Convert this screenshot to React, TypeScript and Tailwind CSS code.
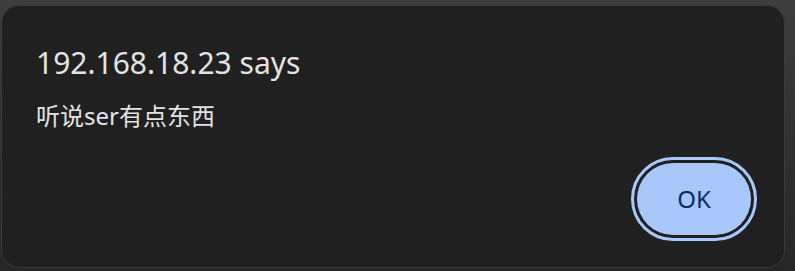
export default function App() {
  return (
    <div className="w-[795px] h-[271px] overflow-hidden bg-gradient-to-b from-[#3d3d3d] to-[#262626] pt-[5px] pl-px">
      <div
        className="w-[784px] h-[263px] rounded-[18px] border border-[#3a3a3a] bg-[#202020] pl-[34px] pr-[33px] pt-[42px] flex flex-col"
        style={{ fontFamily: '"Noto Sans", "Noto Sans CJK SC", sans-serif' }}
      >
        <div className="text-[30px] leading-[30px] text-[#e3e3e3]">192.168.18.23 says</div>
        <div className="mt-[26px] text-[24px] leading-[24px] text-[#e3e3e3]">听说ser有点东西</div>
        <div className="mt-[35px] flex justify-end">
          <button className="w-[114px] h-[72px] rounded-full bg-[#a8c7fa] text-[#062e6f] text-[24px] outline-[3px] outline-solid outline-[#a8c7fa] outline-offset-[3px]">
            OK
          </button>
        </div>
      </div>
    </div>
  );
}
